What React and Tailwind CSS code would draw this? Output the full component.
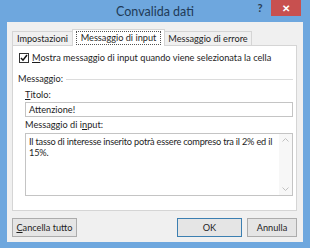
import React from "react";

const font = { fontFamily: 'Lato, "Noto Sans", sans-serif' };

export default function App() {
  return (
    <div
      className="w-[310px] h-[248px] bg-[#6ea7de] flex flex-col text-[9.2px] text-[#1e1e1e] whitespace-nowrap"
      style={font}
    >
      {/* title bar */}
      <div className="h-[22px] relative shrink-0">
        <div className="pt-[4px] text-center text-[12.5px] leading-[15px] text-[#1f3a56]">
          Convalida dati
        </div>
        <div className="absolute top-[1px] left-[255px] w-[10px] text-center text-[11px] font-bold leading-[14px] text-[#2a3d52]">
          ?
        </div>
        <div className="absolute top-0 left-[271px] w-[30px] h-[16px] bg-[#c8504f] flex items-center justify-center text-white text-[10px] font-bold">
          ✕
        </div>
      </div>

      {/* body */}
      <div className="flex-1 mx-[7px] mb-[6px] bg-[#f0f0f0] pl-[5px] pr-[6px] pt-[7px] flex flex-col">
        {/* tabs */}
        <div className="flex items-end h-[16px] relative z-10">
          <div className="h-[14px] border border-b-0 border-[#d5d5d5] bg-[#f0f0f0] leading-[13px] w-[61px] text-center">
            Impostazioni
          </div>
          <div className="h-[17px] -mb-px px-[3px] pt-[1px] border border-b-0 border-[#d5d5d5] bg-white w-[93px] -ml-px">
            <div className="border border-dotted border-[#555] leading-[12px] text-center">
              Messaggio di input
            </div>
          </div>
          <div className="h-[14px] border border-b-0 border-[#d5d5d5] bg-[#f0f0f0] leading-[13px] w-[88px] -ml-px text-center">
            Messaggio di errore
          </div>
        </div>

        {/* panel */}
        <div className="h-[166px] bg-white border border-[#d5d5d5] pt-[6px] pl-[6px] pr-[3px] flex flex-col">
          <div className="flex items-center gap-[3px] h-[11px]">
            <div className="w-[10px] h-[10px] border border-[#333] flex items-center justify-center">
              <svg width="8" height="8" viewBox="0 0 8 8">
                <path d="M1 4 L3 6.2 L7 1" fill="none" stroke="#111" strokeWidth="1.5" />
              </svg>
            </div>
            <span>
              <span className="underline">M</span>ostra messaggio di input quando viene selezionata la cella
            </span>
          </div>

          <div className="flex items-center mt-[10px] h-[12px]">
            <span className="pr-[3px] -ml-px">Messaggio:</span>
            <div className="flex-1 h-px bg-[#dcdcdc]" />
          </div>

          <div className="pl-[6px] mt-[4px]">
            <div className="leading-[12px]">
              <span className="underline">T</span>itolo:
            </div>
            <div className="mt-[1px] h-[15px] border border-[#c4c4c4] bg-white pl-[3px] leading-[13px]">
              Attenzione!
            </div>
            <div className="mt-[2px] leading-[12px]">
              Messaggio di i<span className="underline">n</span>put:
            </div>
            <div className="mt-[2px] h-[63px] border border-[#c4c4c4] bg-white flex">
              <div className="flex-1 pl-[3px] pt-[3px] leading-[10.5px] whitespace-normal tracking-[-0.2px]">
                Il tasso di interesse inserito potrà essere compreso tra il 2% ed il 15%.
              </div>
              <div className="w-[13px] bg-[#f7f7f7] flex flex-col items-center justify-between py-[4px]">
                <svg width="7" height="4" viewBox="0 0 7 4">
                  <path d="M0.5 3.5 L3.5 0.5 L6.5 3.5" fill="none" stroke="#c0c0c0" />
                </svg>
                <svg width="7" height="4" viewBox="0 0 7 4">
                  <path d="M0.5 0.5 L3.5 3.5 L6.5 0.5" fill="none" stroke="#c0c0c0" />
                </svg>
              </div>
            </div>
          </div>
        </div>

        {/* buttons */}
        <div className="flex mt-[7px] h-[19px]">
          <button className="w-[65px] h-[19px] border border-[#acacac] bg-[#e5e5e5]">
            <span className="underline">C</span>ancella tutto
          </button>
          <div className="flex-1" />
          <button className="w-[65px] h-[19px] border border-[#3c7fb1] bg-[#e5e5e5]">OK</button>
          <button className="w-[50px] h-[19px] ml-[5px] border border-[#acacac] bg-[#e5e5e5]">
            Annulla
          </button>
        </div>
      </div>
    </div>
  );
}
